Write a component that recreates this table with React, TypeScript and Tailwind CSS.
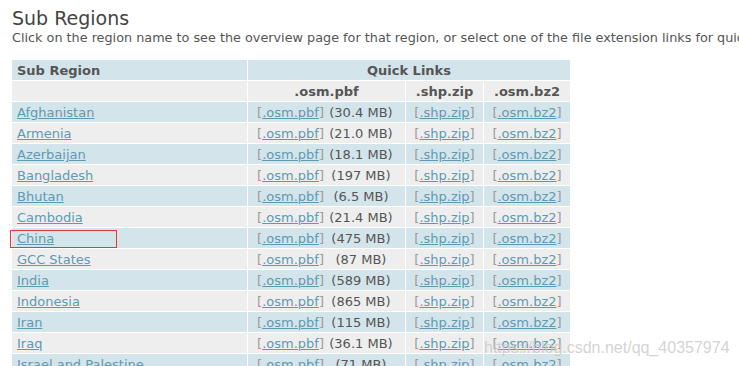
import React from "react";

const rows: [string, string][] = [
  ["Afghanistan", "(30.4 MB)"],
  ["Armenia", "(21.0 MB)"],
  ["Azerbaijan", "(18.1 MB)"],
  ["Bangladesh", "(197 MB)"],
  ["Bhutan", "(6.5 MB)"],
  ["Cambodia", "(21.4 MB)"],
  ["China", "(475 MB)"],
  ["GCC States", "(87 MB)"],
  ["India", "(589 MB)"],
  ["Indonesia", "(865 MB)"],
  ["Iran", "(115 MB)"],
  ["Iraq", "(36.1 MB)"],
  ["Israel and Palestine", "(71 MB)"],
  ["Japan", "(1.3 GB)"],
  ["Jordan", "(12.3 MB)"],
];

function Bracket({ label }: { label: string }) {
  return (
    <span className="text-[#9a9a9a]">
      [<a href="#" className="text-[#5d9ab3] underline">{label}</a>]
    </span>
  );
}

export default function App() {
  return (
    <div className="relative h-[366px] w-[739px] overflow-hidden bg-white text-[#555] [font-family:'DejaVu_Sans',Verdana,sans-serif]">
      <div className="pl-3 pt-[6px]">
        <h1 className="text-[19px] leading-[24px] text-[#444] font-normal">Sub Regions</h1>
        <p className="whitespace-nowrap text-[12.8px] leading-[16px] text-[#555]">
          Click on the region name to see the overview page for that region, or select one of the file extension links for quick access.
        </p>
      </div>
      <table className="ml-[11px] mt-[13px] border-separate border-spacing-[1px] text-[13px] leading-[19px]">
        <thead>
          <tr className="bg-[#d4e4eb]">
            <th className="w-[235px] h-[20px] p-0 pt-[1px] pl-[5px] text-left font-bold">Sub Region</th>
            <th colSpan={3} className="p-0 pt-[1px] text-center font-bold">Quick Links</th>
          </tr>
          <tr className="bg-[#eeeeee]">
            <th className="h-[20px] p-0"></th>
            <th className="w-[157px] p-0 pt-[1px] text-center font-bold">.osm.pbf</th>
            <th className="w-[77px] p-0 pt-[1px] text-center font-bold">.shp.zip</th>
            <th className="w-[86px] p-0 pt-[1px] text-center font-bold">.osm.bz2</th>
          </tr>
        </thead>
        <tbody>
          {rows.map(([name, size], i) => (
            <tr key={name} className={i % 2 === 0 ? "bg-[#d4e4eb]" : "bg-[#eeeeee]"}>
              <td className="h-[20px] p-0 pt-[1px] pl-[5px] whitespace-nowrap">
                <a href="#" className="text-[#5d9ab3] underline">{name}</a>
              </td>
              <td className="p-0 pt-[1px] text-center whitespace-nowrap">
                <Bracket label=".osm.pbf" />
                <span className="ml-[2px] inline-block w-[70px] text-center text-[#555]">{size}</span>
              </td>
              <td className="p-0 pt-[1px] text-center whitespace-nowrap">
                <Bracket label=".shp.zip" />
              </td>
              <td className="p-0 pt-[1px] text-center whitespace-nowrap">
                <Bracket label=".osm.bz2" />
              </td>
            </tr>
          ))}
        </tbody>
      </table>
      <div className="absolute left-[10px] top-[230px] h-[18px] w-[107px] border border-[#e53935]"></div>
      <div className="pointer-events-none absolute left-[484px] top-[338px] text-[16px] leading-[20px] text-[rgba(200,200,200,0.8)] [font-family:'Liberation_Sans',Arial,sans-serif]">
        https://blog.csdn.net/qq_40357974
      </div>
    </div>
  );
}
